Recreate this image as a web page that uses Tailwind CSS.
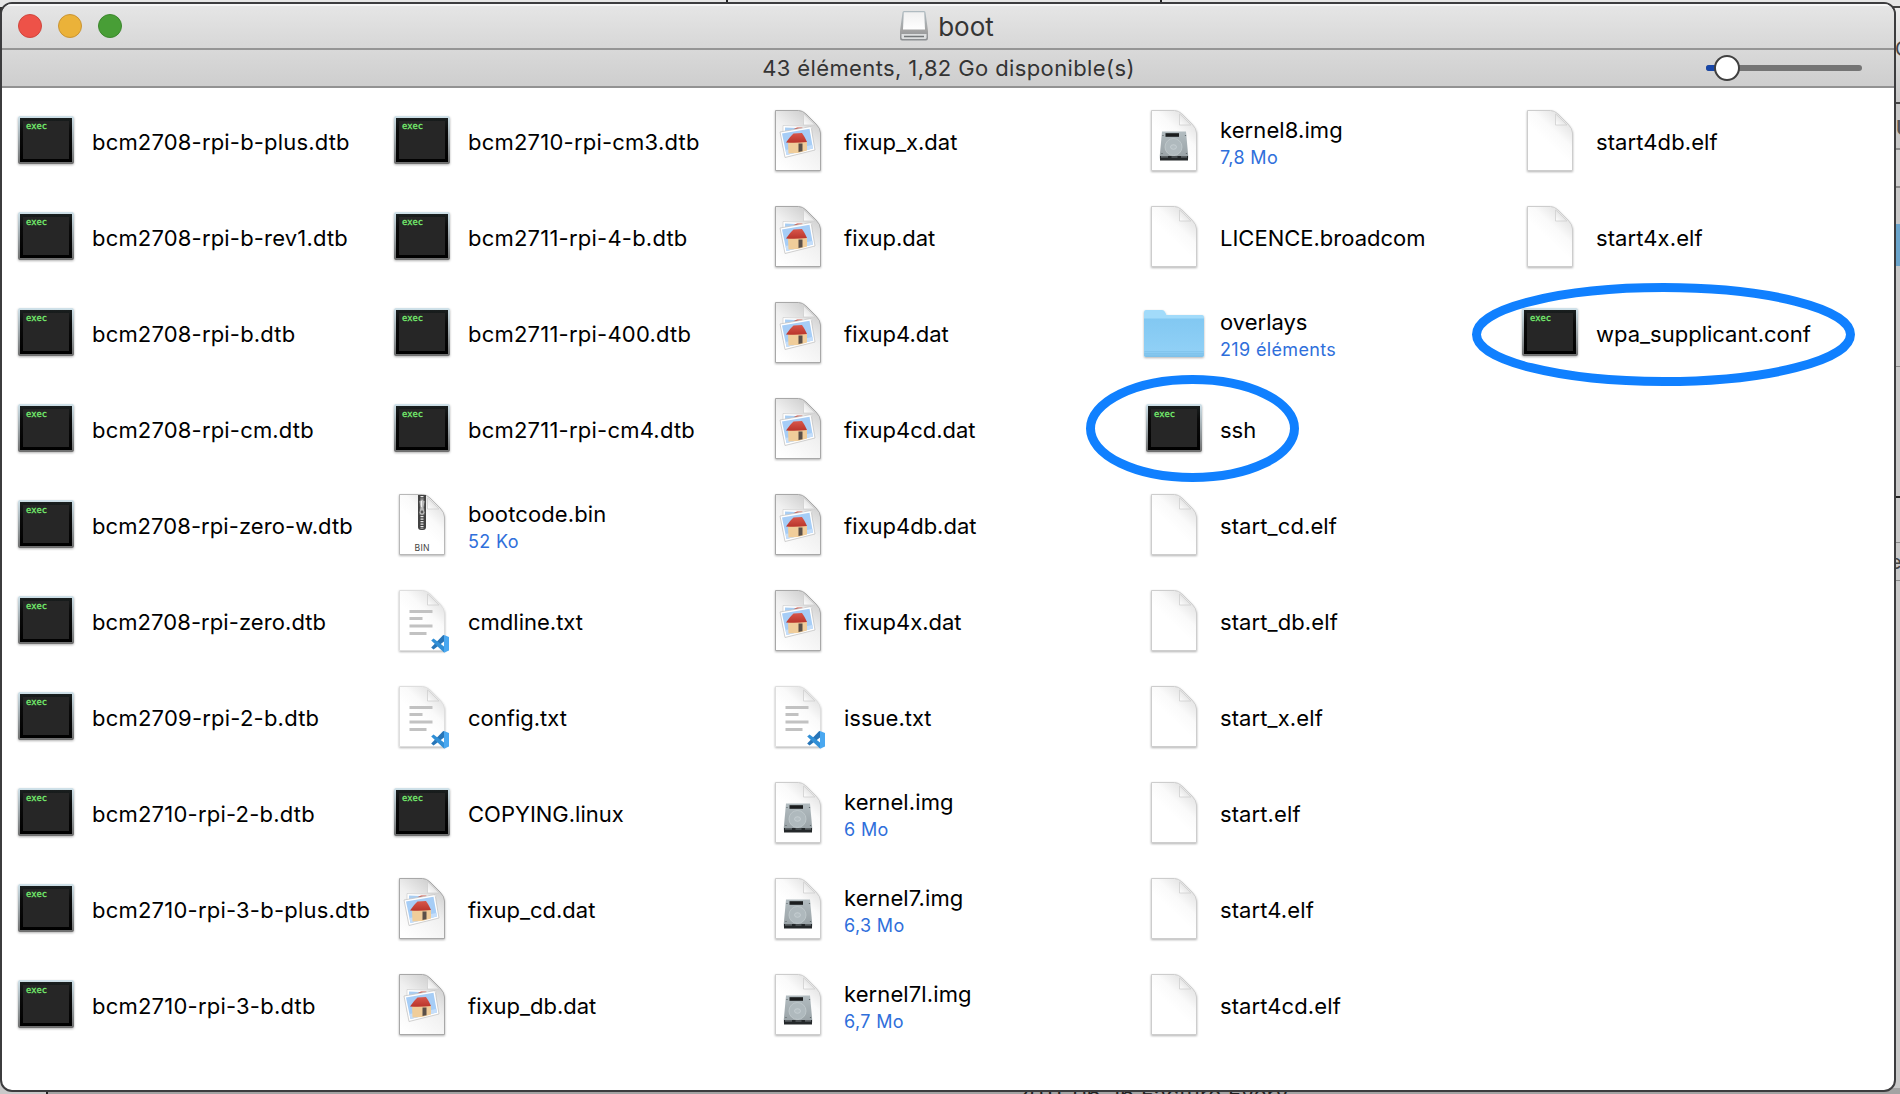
<!DOCTYPE html>
<html lang="fr"><head><meta charset="utf-8"><title>boot</title>
<script src="https://cdn.jsdelivr.net/npm/@tailwindcss/browser@4"></script></head>
<body class="w-[1900px] h-[1094px] overflow-hidden bg-[#c8c8c8] font-['Inter',sans-serif] relative">
<!-- windows behind -->
<div class="absolute left-0 top-0 w-2 h-[1080px] bg-[#333]"></div>
<div class="absolute left-0 top-0 w-[1900px] h-[7px] bg-[#e6e6e6]"></div>
<div class="absolute left-[726px] top-0 w-[2px] h-2 bg-[#222]"></div>
<div class="absolute left-[1160px] top-0 w-[2px] h-2 bg-[#222]"></div>
<div class="absolute left-0 bottom-0 w-[1900px] h-[6px] bg-[#a3a3a3]"></div>
<div class="absolute left-0 bottom-0 w-[48px] h-[6px] bg-[#c9c9c9] border-r-2 border-[#222]"></div>
<div class="absolute left-[1016px] top-[1082px] text-[22px] leading-6 tracking-[0.3px] whitespace-nowrap text-[#222]">2011-06-16 Facture Every</div>
<div class="absolute right-0 top-[6px] w-2 h-[98px] bg-linear-to-b from-[#ececec] to-[#c8c8c8] border-y-2 border-[#444]"></div>
<div class="absolute right-0 top-[148px] w-2 h-[40px] bg-[#cfcfcf] border-y-2 border-[#8a8a8a]"></div>
<div class="absolute right-0 top-[224px] w-2 h-[42px] bg-[#6ba5cc]"></div>
<div class="absolute right-0 top-[366px] w-2 h-px bg-[#8a8a8a]"></div>
<div class="absolute right-0 top-[496px] w-2 h-[2px] bg-[#222]"></div>
<div class="absolute right-0 top-[542px] w-2 h-[39px] border-y border-[#8a8a8a]"></div>
<div class="absolute left-[1895px] top-[37px] text-[20px] leading-6 text-[#444]">C</div>
<div class="absolute left-[1896px] top-[116px] text-[20px] leading-6 font-semibold text-[#555]">U</div>
<div class="absolute left-[1890px] top-[550px] text-[20px] leading-6 text-[#444]">e</div>
<!-- window -->
<main class="absolute left-0 top-[2px] w-[1896px] h-[1090px] border-2 border-[#3c3c3e] rounded-[12px] bg-white overflow-hidden flex flex-col">
<header class="h-[46px] shrink-0 border-b-2 border-[#959595] bg-linear-to-b from-[#e6e6e6] to-[#d7d7d7] flex items-center relative shadow-[inset_0_2px_0_#f6f6f6]">
<div class="flex gap-4 pl-4">
<i class="size-6 rounded-full bg-[#ee5248] border border-[#cf463d]"></i><i class="size-6 rounded-full bg-[#ebb239] border border-[#c99434]"></i><i class="size-6 rounded-full bg-[#489e36] border border-[#3c862d]"></i></div>
<div class="absolute inset-0 flex items-center justify-center gap-[10px] pr-[2px] text-[#343434]">
<svg class="w-7 h-[30px]" viewBox="0 0 28 30"><defs><linearGradient id="dv" x2="0" y2="1"><stop stop-color="#f0f0f0"/><stop offset="1" stop-color="#fff"/></linearGradient><linearGradient id="db" x2="0" y2="1"><stop stop-color="#b0bcc2"/><stop offset=".65" stop-color="#a4a4a4"/><stop offset="1" stop-color="#8a8d90"/></linearGradient></defs><path d="M2.500 1.500q0-1.500 1.500-1.500h20q1.500 0 1.500 1.500L28 20v7q0 2.500-2 2.500H2q-2 0-2-2.500v-7z" fill="url(#db)"/><path d="M3.800 1.200h20.400l.8 17.300H3z" fill="url(#dv)"/><path d="M1.500 23h25v3.500q0 1.500-1.500 1.500H3q-1.500 0-1.500-1.500z" fill="#dcdedf"/><path d="M4 25.500h20" stroke="#74787a" stroke-width="1.500"/></svg>
<span class="text-[26px]">boot</span></div>
</header>
<div class="h-[38px] shrink-0 border-b-2 border-[#929292] bg-linear-to-b from-[#d9d9d9] to-[#cecece] flex items-center justify-center relative">
<span class="text-[22px] tracking-[0.38px] pl-px text-[#343434]">43 éléments, 1,82 Go disponible(s)</span>
<div class="absolute right-[32px] top-[15px] w-[156px] h-[6px] rounded-full bg-[#747474]"><div class="w-5 h-full rounded-l-full bg-[#1746a8]"></div><div class="absolute left-2 -top-[10px] size-[26px] rounded-full bg-white border-2 border-[#404040]"></div></div>
</div>
<section id="files" class="grid grid-flow-col grid-rows-[repeat(10,96px)] grid-cols-[repeat(5,376px)] pt-[4px]"></section>
</main>
<!-- hand-drawn marks around ssh and wpa_supplicant.conf -->
<svg class="absolute inset-0 w-[1900px] h-[1094px] pointer-events-none" fill="none" stroke="#1080ff" stroke-width="9"><ellipse cx="1192.500" cy="428.500" rx="102" ry="49"/><ellipse cx="1663.500" cy="334.500" rx="187" ry="47"/></svg>
<svg class="absolute size-0"><defs>
<linearGradient id="fr" x2="0" y2="1"><stop stop-color="#d0e2ea"/><stop offset="1" stop-color="#6e6e6e"/></linearGradient>
<linearGradient id="bk" x2="0" y2="1"><stop stop-color="#1a1f1f"/><stop offset=".3" stop-color="#0b0b0b"/><stop offset="1" stop-color="#000"/></linearGradient>
<linearGradient id="fold" x1=".75" y1="0" x2=".4" y2=".5"><stop stop-color="#dedede"/><stop offset=".6" stop-color="#fafafa"/><stop offset="1" stop-color="#fff"/></linearGradient>
<linearGradient id="gray" x1=".8" y1="0" x2=".2" y2="1"><stop stop-color="#c8c8c8"/><stop offset=".45" stop-color="#f0f0f0"/><stop offset="1" stop-color="#fff"/></linearGradient>
<linearGradient id="curl" x1="0" y1="1" x2=".7" y2=".3"><stop stop-color="#fff"/><stop offset="1" stop-color="#ddd"/></linearGradient>
<linearGradient id="hd" x2="0" y2="1"><stop stop-color="#b2bcc0"/><stop offset="1" stop-color="#98a1a5"/></linearGradient>
<linearGradient id="roof" x2="0" y2="1"><stop stop-color="#d8574b"/><stop offset="1" stop-color="#b9342b"/></linearGradient>
<linearGradient id="fo" x2="0" y2="1"><stop stop-color="#82c8f2"/><stop offset=".85" stop-color="#90d0f6"/><stop offset="1" stop-color="#7bbfe8"/></linearGradient>
<filter id="sh" x="-20%" y="-20%" width="140%" height="140%"><feDropShadow dx="0" dy="1" stdDeviation="1" flood-opacity=".3"/></filter>
</defs></svg>
<script>
const page=(fill,edge)=>`<g filter="url(#sh)"><path d="M9.500 2.500h23q4 0 7.500 3.500l10 10q4.500 4.500 4.500 9v37.500h-45z" fill="${fill}" stroke="${edge}"/></g><path d="M37.500 6v11h11.500l-9-9Q38.500 6.500 37.500 6z" fill="url(#curl)" stroke="#cfcfcf" stroke-width=".8"/>`;
const icons={
e:`<g filter="url(#sh)"><rect x="4" y="8" width="56" height="48" rx="2" fill="url(#fr)"/></g><rect x="6" y="10" width="52" height="44" fill="url(#bk)"/><rect x="9" y="13" width="46" height="38" fill="#262626"/><text x="12" y="21" font-family="DejaVu Sans Mono" font-size="9" textLength="21" lengthAdjust="spacingAndGlyphs" fill="#78f070" stroke="#78f070" stroke-width=".3">exec</text>`,
p:page('url(#fold)','#cdcdcd'),
d:page('url(#gray)','#a8a8a8')+`<path d="M17 17.500l29.500 1-.5 22-29-1z" fill="#fff" stroke="#cfcfcf" stroke-width=".7"/><path d="M19 19.500l25.500 1v16l-25-1z" fill="#a8cdf2"/><path d="M27 21.500l4-2h5l3 1.500z" fill="#c64a3c"/><path d="M14 24l31-5.500L49 42l-30 7.500z" fill="#fff" stroke="#c4c4c4" stroke-width=".8"/><path d="M16 25.500l27.500-4.800L47 40.500l-26.500 6.500z" fill="#a6cdf6"/><path d="M19.500 42l27-5 .5 3.500-26.500 6.500z" fill="#c5defa"/><path d="M22 34h19v8.500l-9 2.500-9.500.5z" fill="#f0cd9a"/><path d="M32.500 35.500h4v7.800l-4 .7z" fill="#5a4f48"/><path d="M20 34.500q4-6 7.500-9l8.500-.5q3 4 5 9-10.500 1.200-21 .5z" fill="url(#roof)"/>`,
h:page('url(#fold)','#cdcdcd')+`<path d="M20 23.500h24l2.200 24v3H17.800v-3z" fill="url(#hd)"/><path d="M18 48h28V52.500H18z" fill="#24282a"/><path d="M19 48.800h7M29.500 49h6M39 48.800h6" stroke="#6d7478" stroke-width="1.200"/><rect x="23.500" y="25.200" width="13.500" height="3.600" fill="#1b1d1e"/><circle cx="31.500" cy="39" r="8.500" fill="#afb9bd" stroke="#c2cacd" stroke-width=".8"/><ellipse cx="31.500" cy="39" rx="3" ry="2.300" fill="#b4bec2" stroke="#d0d7da" stroke-width=".6"/><path d="M21 27v.8M43.500 27v.8M20 45v.8M44.500 45v.8" stroke="#4e5558" stroke-width="1.200"/>`,
z:page('url(#fold)','#b8b8b8')+`<path d="M28 3h8v32q0 3-3 3h-2q-3 0-3-3z" fill="#424242"/><path d="M32 4v33" stroke="#e8e8e8" stroke-width="3" stroke-dasharray="1.300 1.200"/><path d="M32 6.500l3 3-1 6 1 5q0 3-3 3t-3-3l1-5-1-6z" fill="#b9b9b9" stroke="#4a4a4a" stroke-width=".8"/><circle cx="32" cy="20" r="1.400" fill="#555"/><path d="M31.500 9v6" stroke="#eee"/><text x="32" y="59" text-anchor="middle" font-family="Inter" font-size="8.600" textLength="15" fill="#444">BIN</text>`,
t:page('url(#fold)','#dedede')+`<path d="M19.500 23.500h23M19.500 30.500h13M19.500 38h23M19.500 45.500h17" stroke="#c2c2c2" stroke-width="3"/><path d="M54 47v6.500l-10.500 8-2.300-2L53 47.300z" fill="#2775b8"/><path d="M41.200 52.500l2.300-2L54 58.500V64.500z" fill="#318fd6"/><path d="M54 47l5 2v13.500L54 64.700z" fill="#4aa8f0"/>`,
f:`<g filter="url(#sh)"><path d="M2 12q0-2 2-2h16q2 0 3 2l1.500 3H60q2 0 2 2v38q0 2-2 2H4q-2 0-2-2z" fill="#a2dbfa"/><path d="M2 18.500h60V55q0 2-2 2H4q-2 0-2-2z" fill="url(#fo)"/></g><path d="M2.500 51.500h59M2.500 53.500h59" stroke="#7dc0e9" stroke-width=".7"/>`};
// [icon, name, detail]
const files=[['e','bcm2708-rpi-b-plus.dtb'],['e','bcm2708-rpi-b-rev1.dtb'],['e','bcm2708-rpi-b.dtb'],['e','bcm2708-rpi-cm.dtb'],['e','bcm2708-rpi-zero-w.dtb'],['e','bcm2708-rpi-zero.dtb'],['e','bcm2709-rpi-2-b.dtb'],['e','bcm2710-rpi-2-b.dtb'],['e','bcm2710-rpi-3-b-plus.dtb'],['e','bcm2710-rpi-3-b.dtb'],
['e','bcm2710-rpi-cm3.dtb'],['e','bcm2711-rpi-4-b.dtb'],['e','bcm2711-rpi-400.dtb'],['e','bcm2711-rpi-cm4.dtb'],['z','bootcode.bin','52 Ko'],['t','cmdline.txt'],['t','config.txt'],['e','COPYING.linux'],['d','fixup_cd.dat'],['d','fixup_db.dat'],
['d','fixup_x.dat'],['d','fixup.dat'],['d','fixup4.dat'],['d','fixup4cd.dat'],['d','fixup4db.dat'],['d','fixup4x.dat'],['t','issue.txt'],['h','kernel.img','6 Mo'],['h','kernel7.img','6,3 Mo'],['h','kernel7l.img','6,7 Mo'],
['h','kernel8.img','7,8 Mo'],['p','LICENCE.broadcom'],['f','overlays','219 éléments'],['e','ssh'],['p','start_cd.elf'],['p','start_db.elf'],['p','start_x.elf'],['p','start.elf'],['p','start4.elf'],['p','start4cd.elf'],
['p','start4db.elf'],['p','start4x.elf'],['e','wpa_supplicant.conf']];
const track=n=>/^bcm271|^bcm2709/.test(n)?'tracking-[0.22px]':/zero/.test(n)?'tracking-[0.08px]':/^bcm/.test(n)?'tracking-[0.18px]':/^(start|boot|kernel)/.test(n)?'tracking-[0.1px]':'';
document.getElementById('files').innerHTML=files.map(([i,n,s])=>`<div class="flex items-center pl-3 gap-[14px]"><svg class="w-16 h-16 shrink-0 overflow-visible" viewBox="0 0 64 64">${icons[i]}</svg><div class="flex flex-col whitespace-nowrap ${s?'pt-[8px]':'pt-[4px]'}"><span class="text-[22px] leading-7 text-black ${track(n)}">${n}</span>${s?`<span class="text-[18px] leading-[28px] tracking-[0.35px] text-[#2f6fdb]">${s}</span>`:''}</div></div>`).join('');
</script>
</body></html>
